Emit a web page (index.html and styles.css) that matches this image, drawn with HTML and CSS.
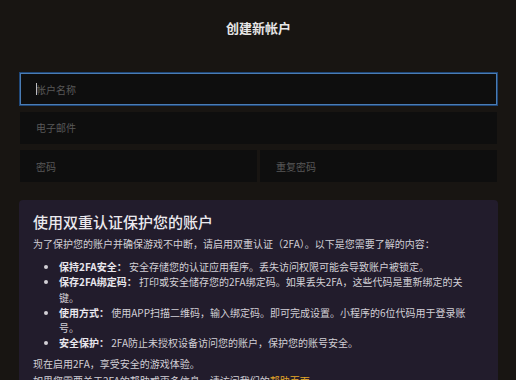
FILE: index.html
```html
<!DOCTYPE html>
<html lang="zh-CN">
<head>
<meta charset="utf-8">
<title>创建新帐户</title>
<link rel="stylesheet" href="styles.css">
</head>
<body>
<div class="page">
  <h1 class="title">创建新帐户</h1>
  <form class="form">
    <div class="field field-focus">
      <input class="input" type="text" placeholder="帐户名称">
      <span class="caret"></span>
    </div>
    <div class="field">
      <input class="input" type="email" placeholder="电子邮件">
    </div>
    <div class="field-row">
      <div class="field">
        <input class="input" type="password" placeholder="密码">
      </div>
      <div class="field">
        <input class="input" type="password" placeholder="重复密码">
      </div>
    </div>
  </form>
  <section class="card">
    <h2 class="card-title">使用双重认证保护您的账户</h2>
    <p class="card-text">为了保护您的账户并确保游戏不中断，请启用双重认证（2FA）。以下是您需要了解的内容：</p>
    <ul class="card-list">
      <li><strong>保持2FA安全：</strong> 安全存储您的认证应用程序。丢失访问权限可能会导致账户被锁定。</li>
      <li><strong>保存2FA绑定码：</strong> 打印或安全储存您的2FA绑定码。如果丢失2FA，这些代码是重新绑定的关键。</li>
      <li><strong>使用方式：</strong> 使用APP扫描二维码，输入绑定码。即可完成设置。小程序的6位代码用于登录账号。</li>
      <li><strong>安全保护：</strong> 2FA防止未授权设备访问您的账户，保护您的账号安全。</li>
    </ul>
    <p class="card-text">现在启用2FA，享受安全的游戏体验。</p>
    <p class="card-text">如果您需要关于2FA的帮助或更多信息，请访问我们的<a class="link" href="#">帮助页面</a>。</p>
  </section>
</div>
</body>
</html>
```

FILE: styles.css
```css
* {
  box-sizing: border-box;
}

html, body {
  margin: 0;
  padding: 0;
  background: #181512;
}

body {
  font-family: "Noto Sans CJK SC", "Noto Sans", sans-serif;
  color: #d2d0d6;
  overflow: hidden;
  height: 380px;
}

.page {
  padding: 0 18px 0 19px;
}

.title {
  margin: 0;
  padding-top: 18px;
  font-size: 13px;
  line-height: 20px;
  font-weight: 700;
  text-align: center;
  color: #e6e6e6;
}

.form {
  margin: 35px 1px 0;
  display: flex;
  flex-direction: column;
  gap: 6.5px;
}

.field {
  position: relative;
  height: 32px;
}

.input {
  display: block;
  width: 100%;
  height: 32px;
  margin: 0;
  padding: 0 0 0 16px;
  border: none;
  outline: none;
  background: #0e0e0e;
  font-family: "Noto Sans CJK SC", "Noto Sans", sans-serif;
  font-size: 10px;
  color: #d0d0d0;
}

.input::placeholder {
  color: #585858;
}

.field-focus .input {
  border: 1px solid #4a7cb4;
  box-shadow: 0 0 0 1px #1f4778;
  padding-left: 15px;
}

.caret {
  position: absolute;
  left: 16px;
  top: 10px;
  width: 1px;
  height: 12px;
  background: #bdbdbd;
}

.field-row {
  display: grid;
  grid-template-columns: 1fr 1fr;
  gap: 3px;
}

.card {
  margin-top: 18px;
  background: #221c2c;
  border-radius: 4px;
  padding: 12px 28px 12px 14px;
  font-size: 10px;
}

.card-title {
  margin: 0 0 3px;
  font-size: 15px;
  line-height: 20px;
  font-weight: 500;
  color: #ebe9ee;
}

.card-text {
  margin: 0;
  line-height: 17px;
}

.card-list {
  margin: 7px 0 4px;
  padding-left: 26px;
  line-height: 15.3px;
}

.card-list strong {
  font-weight: 700;
  color: #e8e6ec;
}

.link {
  color: #e3a628;
  text-decoration: none;
}
```
